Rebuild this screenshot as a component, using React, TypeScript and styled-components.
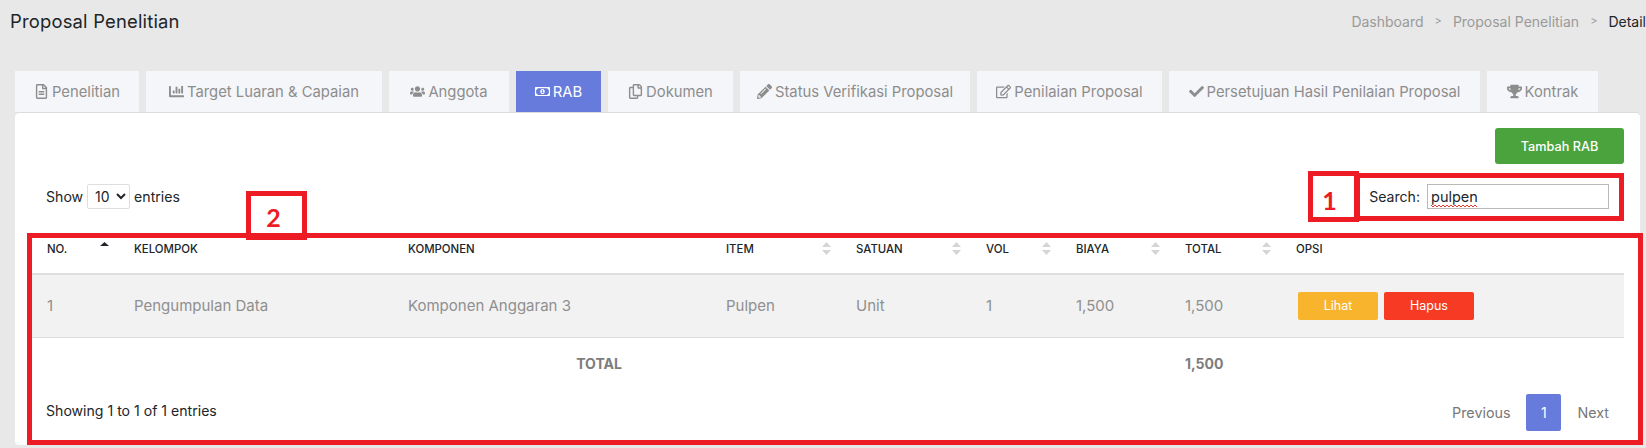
import React from 'react'
import styled, { createGlobalStyle } from 'styled-components'
import {
  FaCheck,
  FaChartBar,
  FaPencilAlt,
  FaRegCopy,
  FaRegEdit,
  FaRegFileAlt,
  FaRegMoneyBillAlt,
  FaTrophy,
  FaUsers,
} from 'react-icons/fa'

const tabs = [
  { label: 'Penelitian', width: 124, icon: <FaRegFileAlt /> },
  { label: 'Target Luaran & Capaian', width: 236, icon: <FaChartBar /> },
  { label: 'Anggota', width: 120, icon: <FaUsers /> },
  { label: 'RAB', width: 85, icon: <FaRegMoneyBillAlt />, active: true },
  { label: 'Dokumen', width: 125, icon: <FaRegCopy /> },
  { label: 'Status Verifikasi Proposal', width: 230, icon: <FaPencilAlt /> },
  { label: 'Penilaian Proposal', width: 185, icon: <FaRegEdit /> },
  { label: 'Persetujuan Hasil Penilaian Proposal', width: 311, icon: <FaCheck /> },
  { label: 'Kontrak', width: 111, icon: <FaTrophy /> },
]

const columns: { label: string; width: number; sort?: 'both' | 'up' }[] = [
  { label: 'NO.', width: 87, sort: 'up' },
  { label: 'KELOMPOK', width: 274 },
  { label: 'KOMPONEN', width: 318 },
  { label: 'ITEM', width: 130, sort: 'both' },
  { label: 'SATUAN', width: 130, sort: 'both' },
  { label: 'VOL', width: 90, sort: 'both' },
  { label: 'BIAYA', width: 109, sort: 'both' },
  { label: 'TOTAL', width: 111, sort: 'both' },
  { label: 'OPSI', width: 343 },
]

const SortMark: React.FC<{ kind: 'both' | 'up' }> = ({ kind }) => (
  <SortIcon width="9" height="13" viewBox="0 0 9 13">
    {kind === 'up' ? (
      <path d="M4.5 0 L9 4 H0 Z" fill="#212529" />
    ) : (
      <>
        <path d="M4.5 0 L9 5 H0 Z" fill="#d5d5d5" />
        <path d="M4.5 13 L9 8 H0 Z" fill="#d5d5d5" />
      </>
    )}
  </SortIcon>
)

export default function App() {
  return (
    <Page>
      <GlobalStyle />
      <TopBar>
        <Title>Proposal Penelitian</Title>
        <Breadcrumb>
          <span>Dashboard</span>
          <Chevron>&gt;</Chevron>
          <span>Proposal Penelitian</span>
          <Chevron>&gt;</Chevron>
          <Current>Detail</Current>
        </Breadcrumb>
      </TopBar>

      <TabBar>
        {tabs.map(tab => (
          <Tab key={tab.label} $width={tab.width} $active={tab.active}>
            {tab.icon}
            {tab.label}
          </Tab>
        ))}
      </TabBar>

      <Card>
        <Actions>
          <AddButton type="button">Tambah RAB</AddButton>
        </Actions>

        <Controls>
          <LengthLabel>
            Show
            <LengthSelect defaultValue="10">
              <option>10</option>
              <option>25</option>
              <option>50</option>
            </LengthSelect>
            entries
          </LengthLabel>
          <SearchLabel>
            Search:
            <SearchField>
              <SearchInput readOnly value="pulpen" />
              {/* spellcheck squiggle under the typed word */}
              <Squiggle width="47" height="4" viewBox="0 0 47 4">
                <path
                  d="M0 1 L2 3 L4 1 L6 3 L8 1 L10 3 L12 1 L14 3 L16 1 L18 3 L20 1 L22 3 L24 1 L26 3 L28 1 L30 3 L32 1 L34 3 L36 1 L38 3 L40 1 L42 3 L44 1 L46 3"
                  fill="none"
                  stroke="#e0392f"
                  strokeWidth="1"
                />
              </Squiggle>
            </SearchField>
          </SearchLabel>
        </Controls>

        <Table>
          <colgroup>
            {columns.map(col => (
              <col key={col.label} width={col.width} />
            ))}
          </colgroup>
          <thead>
            <tr>
              {columns.map(col => (
                <HeadCell key={col.label}>
                  <HeadInner>
                    {col.label}
                    {col.sort && <SortMark kind={col.sort} />}
                  </HeadInner>
                </HeadCell>
              ))}
            </tr>
          </thead>
          <tbody>
            <BodyRow>
              <Cell>1</Cell>
              <Cell>Pengumpulan Data</Cell>
              <Cell>Komponen Anggaran 3</Cell>
              <Cell>Pulpen</Cell>
              <Cell>Unit</Cell>
              <Cell>1</Cell>
              <Cell>1,500</Cell>
              <Cell>1,500</Cell>
              <Cell>
                <RowActions>
                  <RowButton type="button" $color="#f8b42c" $width={80}>
                    Lihat
                  </RowButton>
                  <RowButton type="button" $color="#f73a23" $width={90}>
                    Hapus
                  </RowButton>
                </RowActions>
              </Cell>
            </BodyRow>
          </tbody>
          <tfoot>
            <tr>
              <TotalLabel colSpan={7}>TOTAL</TotalLabel>
              <TotalValue colSpan={2}>1,500</TotalValue>
            </tr>
          </tfoot>
        </Table>

        <Footer>
          <Info>Showing 1 to 1 of 1 entries</Info>
          <Pager>
            <PageLink>Previous</PageLink>
            <PageCurrent>1</PageCurrent>
            <PageLink>Next</PageLink>
          </Pager>
        </Footer>
      </Card>

      <SearchMark />
      <SearchNumber>1</SearchNumber>
      <TableMark />
      <TableNumber>2</TableNumber>
    </Page>
  )
}

const GlobalStyle = createGlobalStyle`
  html, body {
    margin: 0;
    padding: 0;
    background: #e8e8e8;
  }
  * {
    box-sizing: border-box;
  }
`

const Page = styled.div`
  position: relative;
  width: 1646px;
  height: 448px;
  overflow: hidden;
  background: #e8e8e8;
  color: #212529;
  font-family: Inter, 'Noto Sans', sans-serif;
  font-size: 14.1px;
`

const TopBar = styled.div`
  display: flex;
  justify-content: space-between;
  align-items: center;
  height: 42px;
  padding: 0 0 0 10px;
`

const Title = styled.h1`
  margin: 0;
  font-size: 18.4px;
  font-weight: 400;
  letter-spacing: 0.2px;
  color: #212529;
`

const Breadcrumb = styled.div`
  display: flex;
  align-items: center;
  flex-shrink: 0;
  color: #9a9a9a;
  font-size: 14px;
  white-space: nowrap;
`

const Chevron = styled.span`
  margin: 0 11px;
  font-size: 11px;
`

const Current = styled.span`
  color: #212529;
`

const TabBar = styled.div`
  display: flex;
  gap: 7px;
  height: 41px;
  margin-top: 29px;
  padding-left: 15px;
`

const Tab = styled.div<{ $width: number; $active?: boolean }>`
  display: flex;
  align-items: center;
  justify-content: center;
  gap: 3px;
  width: ${p => p.$width}px;
  background: ${p => (p.$active ? '#667bdc' : '#f5f6f9')};
  color: ${p => (p.$active ? '#fff' : '#8d8d8d')};
  font-size: 14.8px;
  white-space: nowrap;

  svg {
    width: 15px;
    height: 15px;
    flex-shrink: 0;
  }
`

const Card = styled.div`
  height: 332px;
  margin: 1px 6px 0 15px;
  padding: 15px 16px 0 17px;
  background: #fff;
  border-radius: 4px;
  box-shadow: 0 -1px 0 #dcdcdc;
`

const Actions = styled.div`
  display: flex;
  justify-content: flex-end;
`

const AddButton = styled.button`
  width: 129px;
  height: 36px;
  border: none;
  border-radius: 3px;
  background: #4ba33d;
  color: #fff;
  font-family: inherit;
  font-size: 12.7px;
  font-weight: 500;
`

const Controls = styled.div`
  display: flex;
  justify-content: space-between;
  align-items: center;
  height: 25px;
  margin-top: 20px;
  padding: 0 15px 0 14px;
`

const LengthLabel = styled.label`
  display: flex;
  align-items: center;
  gap: 4px;
`

const LengthSelect = styled.select`
  width: 43px;
  height: 25px;
  padding: 0 0 0 3px;
  border: 1px solid #dedede;
  border-radius: 2px;
  background: #fff;
  color: #212529;
  font-family: inherit;
  font-size: 14px;
`

const SearchLabel = styled.label`
  display: flex;
  align-items: center;
  gap: 7px;
`

const SearchField = styled.span`
  position: relative;
  display: block;
`

const SearchInput = styled.input`
  display: block;
  width: 182px;
  height: 25px;
  padding: 0 3px;
  border: 1px solid #b9b9b9;
  outline: none;
  color: #212529;
  font-family: inherit;
  font-size: 14.5px;
`

const Squiggle = styled.svg`
  position: absolute;
  left: 4px;
  bottom: 1px;
  display: block;
`

const Table = styled.table`
  width: 1592px;
  margin-top: 14px;
  border-collapse: collapse;
  table-layout: fixed;
`

const HeadCell = styled.th`
  height: 51px;
  padding: 1px 15px 0;
  border-bottom: 2px solid #dedede;
  color: #212529;
  font-size: 11.4px;
  font-weight: 500;
  text-align: left;
`

const HeadInner = styled.div`
  display: flex;
  justify-content: space-between;
  align-items: center;
  margin-right: -5px;
`

const SortIcon = styled.svg`
  display: block;
  flex-shrink: 0;
`

const BodyRow = styled.tr`
  height: 63px;
  background: #f2f2f2;
  border-bottom: 1px solid #dedede;
`

const Cell = styled.td`
  padding: 0 15px;
  color: #8f8f8f;
  font-size: 15px;
  white-space: nowrap;
`

const RowActions = styled.div`
  display: flex;
  gap: 6px;
  margin-left: 2px;
`

const RowButton = styled.button<{ $color: string; $width: number }>`
  width: ${p => p.$width}px;
  height: 28px;
  border: none;
  border-radius: 2px;
  background: ${p => p.$color};
  color: #fff;
  font-family: inherit;
  font-size: 12.5px;
`

const TotalLabel = styled.td`
  height: 52px;
  padding-right: 5px;
  color: #7d7d7d;
  font-size: 14px;
  font-weight: 700;
  text-align: center;
`

const TotalValue = styled.td`
  padding: 0 15px;
  color: #7d7d7d;
  font-size: 14px;
  font-weight: 700;
`

const Footer = styled.div`
  display: flex;
  justify-content: space-between;
  align-items: center;
  height: 37px;
  margin-top: 5px;
  padding: 0 15px 0 14px;
`

const Info = styled.div`
  margin-top: -4px;
  color: #212529;
`

const Pager = styled.div`
  display: flex;
  align-items: center;
  gap: 16px;
`

const PageLink = styled.span`
  color: #777;
  font-size: 14.3px;
`

const PageCurrent = styled.span`
  display: flex;
  align-items: center;
  justify-content: center;
  width: 35px;
  height: 37px;
  border-radius: 2px;
  background: #667bdc;
  color: #fff;
  font-size: 14px;
`

const SearchMark = styled.div`
  position: absolute;
  left: 1355px;
  top: 173px;
  width: 269px;
  height: 48px;
  border: 5px solid #ed1c24;
`

const SearchNumber = styled.div`
  position: absolute;
  left: 1308px;
  top: 171px;
  width: 51px;
  height: 51px;
  padding: 9px 8px 0 0;
  border: 5px solid #ed1c24;
  color: #ed1c24;
  font-family: Lato, sans-serif;
  font-size: 25px;
  font-weight: 700;
  text-align: center;
`

const TableMark = styled.div`
  position: absolute;
  left: 27px;
  top: 233px;
  width: 1616px;
  height: 212px;
  border: 5px solid #ed1c24;
`

const TableNumber = styled.div`
  position: absolute;
  left: 246px;
  top: 191px;
  width: 61px;
  height: 49px;
  padding: 6px 6px 0 0;
  border: 5px solid #ed1c24;
  color: #ed1c24;
  font-family: Lato, sans-serif;
  font-size: 25px;
  font-weight: 700;
  text-align: center;
`
